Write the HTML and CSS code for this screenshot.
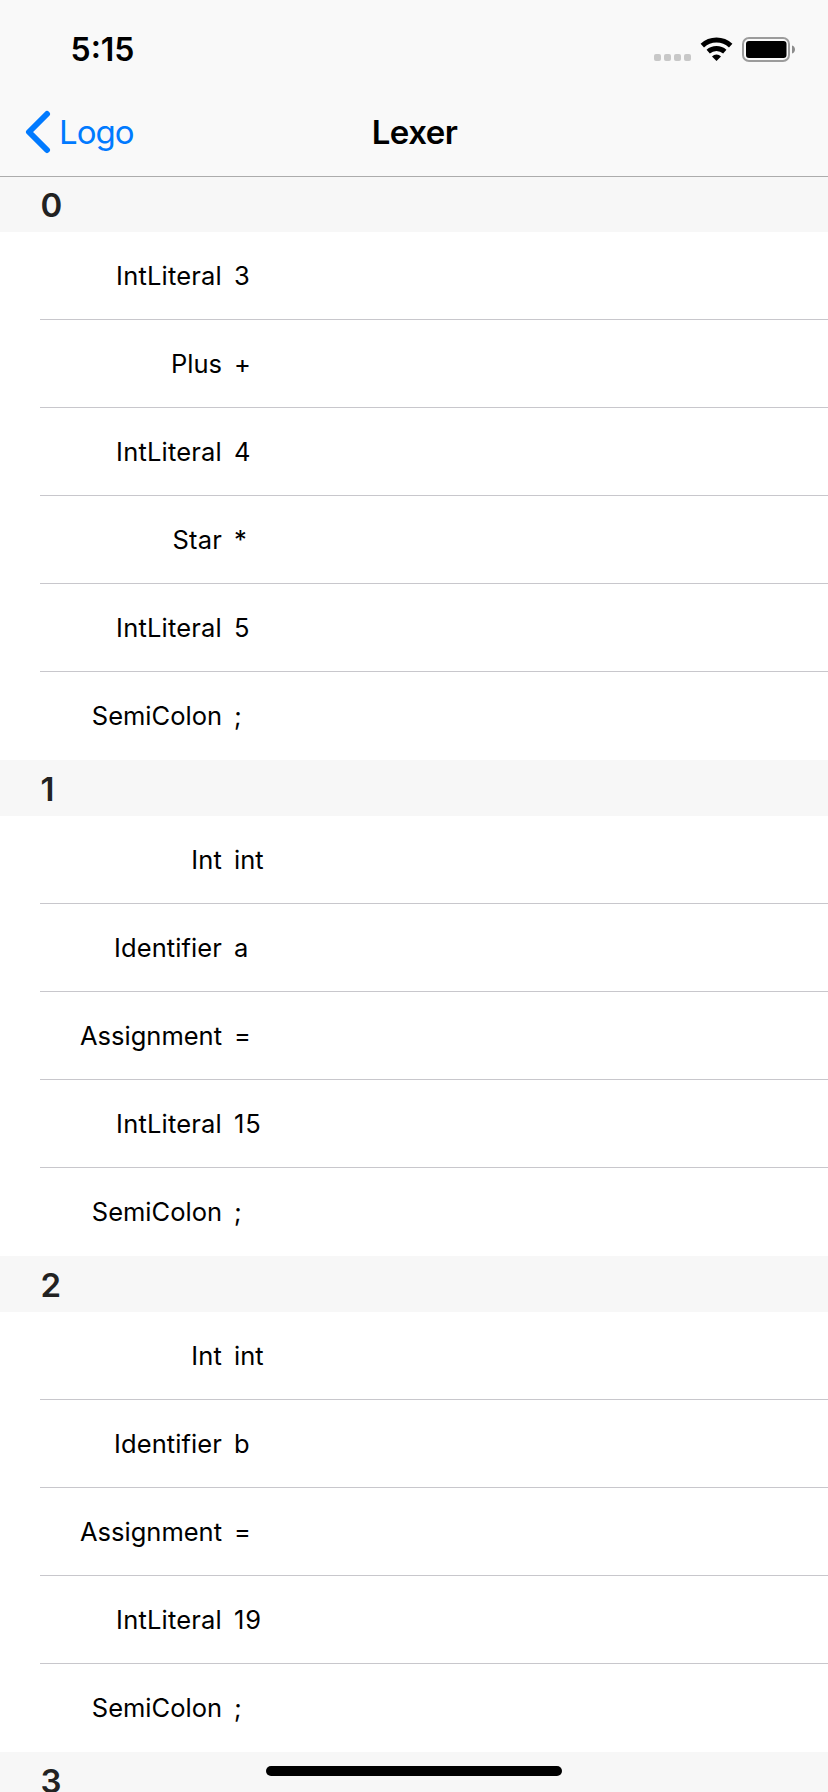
FILE: index.html
```html
<!DOCTYPE html>
<html lang="en">
<head>
<meta charset="utf-8">
<title>Lexer</title>
<link rel="stylesheet" href="styles.css">
</head>
<body>
<div class="screen">
  <header class="top">
    <div class="status">
      <span class="time">5:15</span>
      <div class="indicators">
        <svg class="signal" width="37" height="7" viewBox="0 0 37 7"><rect width="7" height="7" rx="2"/><rect x="10" width="7" height="7" rx="2"/><rect x="20" width="7" height="7" rx="2"/><rect x="30" width="7" height="7" rx="2"/></svg>
        <svg class="wifi" width="34" height="24" viewBox="0 0 34 24"><path d="M2.3 8.6a20.8 20.8 0 0 1 28.4 0M8.2 14.6a12.6 12.6 0 0 1 16.6 0"/><path class="wifi-dot" d="M16.500 24l-4.500-4.600a6.500 6.500 0 0 1 9 0z"/></svg>
        <svg class="battery" width="54" height="25" viewBox="0 0 54 25"><rect class="case" x="1" y="1" width="46" height="23" rx="6"/><rect x="4" y="4" width="40.500" height="17" rx="3"/><path class="nub" d="M50 8.500c4 1 4 7 0 8z"/></svg>
      </div>
    </div>
    <nav class="nav">
      <a class="back"><svg class="chevron" width="26" height="44" viewBox="0 0 26 44"><path d="M22 4L4 22l18 18"/></svg><span>Logo</span></a>
      <h1 class="title">Lexer</h1>
    </nav>
  </header>
  <main class="list">
    <h2 class="section">0</h2>
    <ul class="rows">
      <li class="row"><span class="kind literal">IntLiteral</span><span class="value">3</span></li>
      <li class="row"><span class="kind">Plus</span><span class="value">+</span></li>
      <li class="row"><span class="kind literal">IntLiteral</span><span class="value">4</span></li>
      <li class="row"><span class="kind literal">Star</span><span class="value">*</span></li>
      <li class="row"><span class="kind literal">IntLiteral</span><span class="value">5</span></li>
      <li class="row"><span class="kind">SemiColon</span><span class="value">;</span></li>
    </ul>
    <h2 class="section">1</h2>
    <ul class="rows">
      <li class="row"><span class="kind literal">Int</span><span class="value">int</span></li>
      <li class="row"><span class="kind name">Identifier</span><span class="value">a</span></li>
      <li class="row"><span class="kind">Assignment</span><span class="value">=</span></li>
      <li class="row"><span class="kind literal">IntLiteral</span><span class="value number">15</span></li>
      <li class="row"><span class="kind">SemiColon</span><span class="value">;</span></li>
    </ul>
    <h2 class="section">2</h2>
    <ul class="rows">
      <li class="row"><span class="kind literal">Int</span><span class="value">int</span></li>
      <li class="row"><span class="kind name">Identifier</span><span class="value">b</span></li>
      <li class="row"><span class="kind">Assignment</span><span class="value">=</span></li>
      <li class="row"><span class="kind literal">IntLiteral</span><span class="value number">19</span></li>
      <li class="row"><span class="kind">SemiColon</span><span class="value">;</span></li>
    </ul>
    <h2 class="section">3</h2>
  </main>
  <div class="home"></div>
</div>
</body>
</html>
```
FILE: styles.css
```css
* { box-sizing: border-box; margin: 0; padding: 0; }
body { background: #fff; font-family: Inter, "Liberation Sans", sans-serif; color: #000; }
.screen { position: relative; width: 828px; height: 1792px; overflow: hidden; }
.top { height: 177px; background: #f9f9f9; border-bottom: 1px solid #acacac; }
.status { display: flex; justify-content: space-between; height: 88px; padding: 30px 33px 0 70.5px; }
.time { font-size: 32px; line-height: 40px; font-weight: 600; letter-spacing: 0; }
.indicators { display: flex; align-items: flex-start; padding-top: 7px; }
.signal { margin-top: 17px; fill: #c8c8c8; }
.wifi { margin-left: 9px; fill: none; stroke: #000; stroke-width: 5; }
.wifi-dot { fill: #000; stroke: none; }
.battery { margin-left: 8px; margin-right: -1px; }
.case { fill: none; stroke: #9c9c9c; stroke-width: 2; }
.nub { fill: #8c8c8c; }
.nav { display: grid; grid-template-columns: 1fr auto 1fr; align-items: center; height: 88px; padding: 0 25px; }
.back { display: flex; align-items: center; color: #007aff; font-size: 33px; line-height: 40px; letter-spacing: -1px; }
.back span { margin-left: 8px; }
.chevron { fill: none; stroke: #007aff; stroke-width: 6; stroke-linecap: round; stroke-linejoin: round; }
.title { font-size: 33px; line-height: 40px; font-weight: 600; letter-spacing: -0.5px; padding-left: 1px; }
.section { height: 56px; padding-left: 40.5px; background: #f7f7f7; color: #222; font-size: 33px; line-height: 58px; font-weight: 600; }
.section:first-child { height: 55px; line-height: 56px; }
.section:last-child { height: 40px; }
.rows { list-style: none; padding-left: 40px; }
.row { display: flex; gap: 12px; height: 88px; border-bottom: 1px solid #c8c7cc; font-size: 25.5px; line-height: 88px; }
.row:last-child { border-bottom-color: transparent; }
.kind { width: 182px; text-align: right; }
.literal { letter-spacing: 0.2px; }
.name { letter-spacing: 0.1px; }
.number { letter-spacing: 0.8px; }
.home { position: absolute; left: 266px; top: 1766px; width: 296px; height: 10px; border-radius: 5px; background: #000; }
```
